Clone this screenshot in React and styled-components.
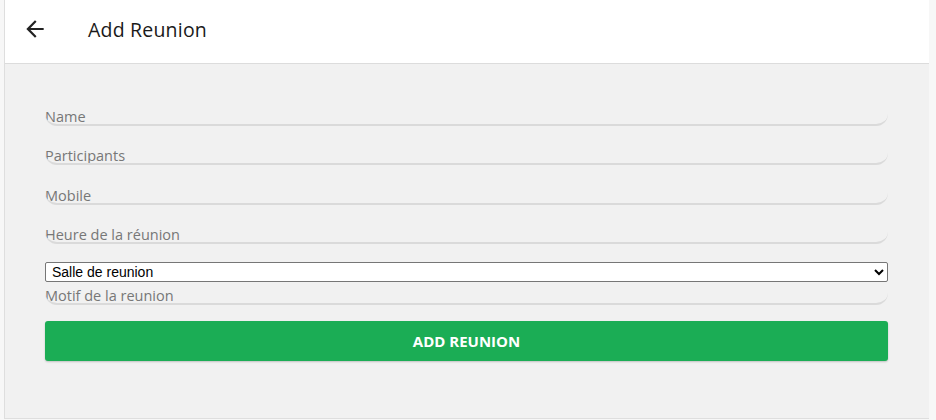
import React from 'react'
import styled, { createGlobalStyle } from 'styled-components'

const GlobalStyle = createGlobalStyle`
  html, body {
    margin: 0;
    padding: 0;
    background: #f7f7f7;
    font-family: 'Open Sans', 'Noto Sans', sans-serif;
  }
`

const fields = ['Name', 'Participants', 'Mobile', 'Heure de la réunion']

const App = () => {
  return (
    <>
      <GlobalStyle />
      <Wrapper>
        <Header>
          <BackButton aria-label='back'>
            <svg width='26' height='26' viewBox='0 0 24 24'>
              <path
                fill='#222'
                d='M20 11H7.83l5.59-5.59L12 4l-8 8 8 8 1.41-1.41L7.83 13H20v-2z'
              />
            </svg>
          </BackButton>
          <Title>Add Reunion</Title>
        </Header>
        <Form onSubmit={(e) => e.preventDefault()}>
          {fields.map((item, index) => (
            <Field
              key={item}
              placeholder={item}
              $gap={index === fields.length - 1 ? 18 : 15.4}
            />
          ))}
          <Select defaultValue='salle'>
            <option value='salle'>Salle de reunion</option>
          </Select>
          <Field placeholder='Motif de la reunion' $top={-1} $gap={16} />
          <SubmitButton type='submit'>Add Reunion</SubmitButton>
        </Form>
      </Wrapper>
    </>
  )
}

export default App

const Wrapper = styled.div`
  margin-left: 4px;
  width: 924px;
  height: 418px;
  background: #f1f1f1;
  border-left: 1px solid #dedede;
  border-bottom: 1px solid #dedede;
  display: flex;
  flex-direction: column;
`

const Header = styled.header`
  height: 63px;
  background: #fff;
  border-bottom: 1px solid #dcdcdc;
  display: flex;
  align-items: center;
  padding-left: 17px;
  flex-shrink: 0;
`

const BackButton = styled.button`
  border: none;
  background: none;
  padding: 0;
  margin-top: -6px;
  display: flex;
  cursor: pointer;
`

const Title = styled.h1`
  margin: -5px 0 0 40px;
  font-size: 19.5px;
  font-weight: 500;
  letter-spacing: 0.2px;
  color: #1a1a1a;
`

const Form = styled.form`
  display: flex;
  flex-direction: column;
  padding: 38px 41px 0 40px;
`

const Field = styled.input`
  height: 24px;
  box-sizing: border-box;
  margin: ${({ $top = 0 }) => $top}px 0 ${({ $gap }) => $gap}px;
  padding: 7px 0 0;
  border: none;
  border-bottom: 2px solid #dadada;
  border-radius: 0 0 12px 12px;
  background: transparent;
  font-family: 'Open Sans', 'Noto Sans', sans-serif;
  font-size: 14.5px;
  color: #333;
  outline: none;
  &::placeholder {
    color: #777;
  }
`

const Select = styled.select`
  height: 20px;
  box-sizing: border-box;
  margin: 0;
  padding: 0 2px;
  border: 1px solid #767676;
  border-radius: 2px;
  background: #fff;
  font-family: 'Liberation Sans', Arial, sans-serif;
  font-size: 14px;
  color: #000;
`

const SubmitButton = styled.button`
  height: 40px;
  border: none;
  border-radius: 3px;
  background: #1bad55;
  box-shadow: 0 1px 2px rgba(0, 0, 0, 0.2);
  color: #fff;
  font-family: 'Open Sans', 'Noto Sans', sans-serif;
  font-size: 15px;
  font-weight: 700;
  text-transform: uppercase;
  cursor: pointer;
`
